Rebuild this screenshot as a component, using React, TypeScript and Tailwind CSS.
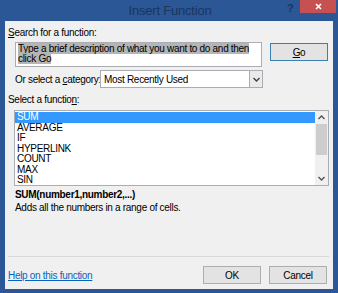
import React from "react";

const items = ["SUM", "AVERAGE", "IF", "HYPERLINK", "COUNT", "MAX", "SIN"];

function Btn({ children, focused }: { children: React.ReactNode; focused?: boolean }) {
  return (
    <button
      className={`w-[58px] h-[18px] flex items-center justify-center text-[10px] text-black bg-[#e3e3e3] border ${
        focused ? "border-[#3c7fb1]" : "border-[#adadad]"
      }`}
    >
      {children}
    </button>
  );
}

export default function App() {
  return (
    <div
      className="w-[338px] h-[293px] bg-[#2b5797] flex flex-col text-black text-[10px] leading-[13px] tracking-[-0.3px] whitespace-nowrap"
      style={{ fontFamily: '"Liberation Sans", Arial, sans-serif' }}
    >
      {/* Title bar */}
      <div className="h-[21px] relative flex items-center justify-center shrink-0">
        <span className="text-[13px] tracking-[-0.2px] text-[#1b355c] pl-[2px]">Insert Function</span>
        <span className="absolute left-[287px] top-[2px] text-[11px] font-bold text-[#1b355c]">?</span>
        <div className="absolute right-[2px] top-0 w-[36px] h-[13px] bg-[#c75050] flex items-center justify-center">
          <svg width="7" height="7" viewBox="0 0 7 7">
            <path d="M1 1 L6 6 M6 1 L1 6" stroke="white" strokeWidth="1.6" />
          </svg>
        </div>
      </div>

      {/* Body */}
      <div className="flex-1 mx-[5px] mb-[4px] bg-[#f0f0f0] flex flex-col pl-[3px] pr-[5px]">
        <div className="mt-[5px] h-[13px]">
          <span className="underline">S</span>earch for a function:
        </div>

        <div className="mt-[3px] flex items-start">
          <div className="ml-[7px] w-[248px] h-[25px] bg-white border border-[#abadb3] pl-[2px] pt-[1px] leading-[10px] whitespace-normal">
            <span className="bg-[#b5b5b5]">Type a brief description of what you want to do and then click Go</span>
          </div>
          <div className="ml-[8px] mt-[1px]">
            <Btn focused>
              <span className="underline">G</span>o
            </Btn>
          </div>
        </div>

        <div className="mt-[3px] flex items-center h-[18px]">
          <span className="ml-[7px] w-[85px]">
            Or select a <span className="underline">c</span>ategory:
          </span>
          <div className="w-[163px] h-[18px] bg-white border border-[#abadb3] flex items-center">
            <span className="flex-1 pl-[3px]">Most Recently Used</span>
            <div className="w-[13px] h-full border-l border-[#abadb3] bg-[#eaeaea] flex items-center justify-center">
              <svg width="7" height="5" viewBox="0 0 7 5">
                <path d="M0.5 1 L3.5 4 L6.5 1" stroke="#404040" strokeWidth="1.4" fill="none" />
              </svg>
            </div>
          </div>
        </div>

        <div className="mt-[5px] h-[13px]">
          Select a functio<span className="underline">n</span>:
        </div>

        <div className="mt-[4px] ml-[6px] w-[315px] h-[76px] bg-white border border-[#abadb3] flex">
          <div className="flex-1 pt-[1px] leading-[10.5px]">
            {items.map((it, i) => (
              <div
                key={it}
                className={`h-[10.5px] pl-[2px] ${i === 0 ? "bg-[#3399ff] text-white" : ""}`}
              >
                {it}
              </div>
            ))}
          </div>
          <div className="w-[13px] bg-[#f0f0f0] flex flex-col items-center">
            <div className="h-[13px] flex items-center justify-center">
              <svg width="7" height="5" viewBox="0 0 7 5">
                <path d="M0.5 4 L3.5 1 L6.5 4" stroke="#505050" strokeWidth="1.3" fill="none" />
              </svg>
            </div>
            <div className="w-[11px] h-[31px] bg-[#cdcdcd]" />
            <div className="flex-1" />
            <div className="h-[13px] flex items-center justify-center">
              <svg width="7" height="5" viewBox="0 0 7 5">
                <path d="M0.5 1 L3.5 4 L6.5 1" stroke="#505050" strokeWidth="1.3" fill="none" />
              </svg>
            </div>
          </div>
        </div>

        <div className="mt-[2px] ml-[7px] h-[13px] font-bold">SUM(number1,number2,...)</div>
        <div className="ml-[7px] h-[13px]">Adds all the numbers in a range of cells.</div>

        <div className="mt-[42px] h-px bg-[#d9d9d9] mr-[-1px]" />

        <div className="mt-[9px] flex items-center">
          <a className="text-[#0563c1] underline flex-1">Help on this function</a>
          <Btn>OK</Btn>
          <div className="w-[8px]" />
          <Btn>Cancel</Btn>
          <div className="w-[1px]" />
        </div>
      </div>
    </div>
  );
}
